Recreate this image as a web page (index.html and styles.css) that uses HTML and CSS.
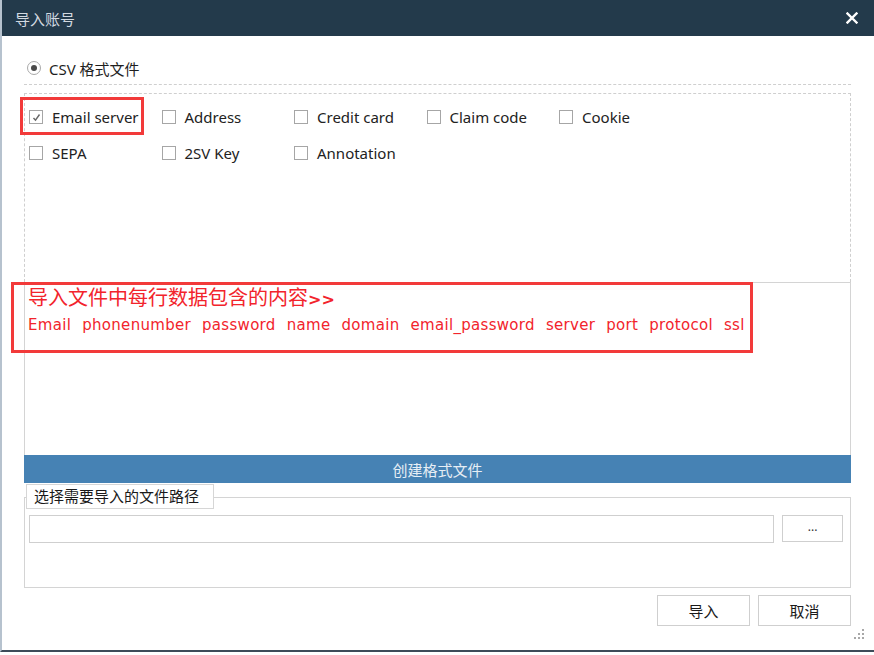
FILE: index.html
```html
<!DOCTYPE html>
<html lang="zh">
<head>
<meta charset="utf-8">
<title>导入账号</title>
<link rel="stylesheet" href="styles.css">
</head>
<body>
<div class="window">
  <div class="titlebar">
    <span class="title">导入账号</span>
    <svg class="close" width="12" height="12" viewBox="0 0 12 12"><path d="M1.5 1.5L10.5 10.5M10.5 1.5L1.5 10.5" stroke="#fff" stroke-width="2.4" stroke-linecap="square"/></svg>
  </div>
  <div class="content">
    <div class="radio-row">
      <span class="radio"><span class="dot"></span></span>
      <span class="radio-label">CSV 格式文件</span>
    </div>
    <div class="dash-line"></div>
    <div class="check-panel">
      <div class="check-grid">
        <label class="check"><span class="box checked"><svg width="11" height="11" viewBox="0 0 11 11"><path d="M2.5 6L4.5 8.2L8.5 2.5" stroke="#666" stroke-width="1.4" fill="none"/></svg></span>Email server</label>
        <label class="check"><span class="box"></span>Address</label>
        <label class="check"><span class="box"></span>Credit card</label>
        <label class="check"><span class="box"></span>Claim code</label>
        <label class="check"><span class="box"></span>Cookie</label>
        <label class="check"><span class="box"></span>SEPA</label>
        <label class="check"><span class="box"></span>2SV Key</label>
        <label class="check"><span class="box"></span>Annotation</label>
      </div>
      <div class="mark mark-email"></div>
    </div>
    <div class="info-panel">
      <div class="mark mark-info">
        <div class="info-title">导入文件中每行数据包含的内容<b>&gt;&gt;</b></div>
        <div class="info-fields">Email phonenumber password name domain email_password server port protocol ssl</div>
      </div>
    </div>
    <div class="create-bar">创建格式文件</div>
    <div class="group">
      <div class="group-label">选择需要导入的文件路径</div>
      <div class="group-row">
        <div class="path-input"></div>
        <div class="browse">...</div>
      </div>
    </div>
    <div class="footer">
      <div class="btn">导入</div>
      <div class="btn">取消</div>
    </div>
  </div>
  <svg class="grip" width="10" height="10" viewBox="0 0 10 10"><g fill="#a8a8a8"><rect x="8" y="0" width="2" height="2"/><rect x="8" y="4" width="2" height="2"/><rect x="4" y="4" width="2" height="2"/><rect x="8" y="8" width="2" height="2"/><rect x="4" y="8" width="2" height="2"/><rect x="0" y="8" width="2" height="2"/></g></svg>
</div>
</body>
</html>
```
FILE: styles.css
```css
* { box-sizing: border-box; }
html, body { margin: 0; padding: 0; background: #fff; }
body {
  width: 874px;
  height: 655px;
  font-family: "Noto Sans", "Noto Sans CJK SC", sans-serif;
  color: #1e1e1e;
  overflow: hidden;
}
.window {
  position: relative;
  width: 874px;
  height: 652px;
  border-left: 2px solid #b6c2ce;
  border-bottom: 2px solid #3d4b59;
  background: #fff;
}
.titlebar {
  height: 36px;
  background: #233a4b;
  display: flex;
  align-items: center;
  justify-content: space-between;
  padding: 0 16px 0 13px;
}
.title {
  font-family: "Noto Sans CJK SC", sans-serif;
  font-size: 15px;
  color: #d2d9e0;
}
.close { display: block; }
.content {
  padding: 22px 23px 0 22px;
}
.radio-row {
  display: flex;
  align-items: center;
  height: 20px;
  padding-left: 3px;
}
.radio {
  width: 14px;
  height: 14px;
  border: 1px solid #a9a9a9;
  border-radius: 50%;
  display: flex;
  align-items: center;
  justify-content: center;
  margin-right: 8px;
}
.dot {
  width: 6px;
  height: 6px;
  border-radius: 50%;
  background: #4a4a4a;
}
.radio-label {
  font-size: 15px;
  font-family: "Noto Sans", "Noto Sans CJK SC", sans-serif;
}
.dash-line {
  margin-top: 6px;
  border-top: 1px dashed #cfcfcf;
}
.check-panel {
  position: relative;
  margin-top: 8px;
  height: 189px;
  border: 1px dashed #cfcfcf;
  border-bottom: none;
  padding: 13px 0 0 4px;
}
.check-grid {
  display: grid;
  grid-template-columns: repeat(5, 132.5px);
  row-gap: 16px;
}
.check {
  display: flex;
  align-items: center;
  height: 20px;
  font-size: 15px;
  color: #222;
}
.box {
  width: 14px;
  height: 14px;
  border: 1px solid #a6a6a6;
  margin-right: 9px;
  display: flex;
  align-items: center;
  justify-content: center;
  flex: none;
}
.mark {
  position: absolute;
  border: 3px solid #f23a3a;
}
.mark-email {
  left: -5px;
  top: 3px;
  width: 124px;
  height: 38px;
}
.info-panel {
  position: relative;
  height: 173px;
  border: 1px solid #d4d4d4;
  border-bottom: none;
}
.mark-info {
  left: -14px;
  top: -1px;
  width: 742px;
  height: 71px;
  padding: 0 0 0 14px;
  color: #f2242c;
}
.info-title {
  font-family: "Noto Sans CJK SC", sans-serif;
  font-size: 20px;
  line-height: 24px;
}
.info-title b { font-family: "DejaVu Sans", sans-serif; font-size: 16px; }
.info-fields {
  margin-top: 3px;
  font-family: "DejaVu Sans", sans-serif;
  font-size: 15px;
  letter-spacing: 0.3px;
  word-spacing: 6px;
  line-height: 20px;
  white-space: nowrap;
}
.create-bar {
  height: 28px;
  background: #4682b4;
  color: #e6eef5;
  font-family: "Noto Sans CJK SC", sans-serif;
  font-size: 15px;
  display: flex;
  align-items: center;
  justify-content: center;
}
.group {
  position: relative;
  margin-top: 14px;
  height: 91px;
  border: 1px solid #d4d4d4;
  padding: 17px 7px 0 4px;
}
.group-label {
  position: absolute;
  left: 1px;
  top: -14px;
  height: 25px;
  padding: 0 14px 0 7px;
  border: 1px solid #d6d6d6;
  background: #fff;
  font-family: "Noto Sans CJK SC", sans-serif;
  font-size: 15px;
  line-height: 22px;
  color: #1a1a1a;
}
.group-row {
  display: flex;
  gap: 8px;
}
.path-input {
  width: 747px;
  height: 28px;
  border: 1px solid #cfcfcf;
}
.browse {
  width: 61px;
  height: 27px;
  border: 1px solid #cfcfcf;
  font-size: 12px;
  display: flex;
  align-items: center;
  justify-content: center;
  padding-bottom: 4px;
  color: #333;
}
.footer {
  display: flex;
  justify-content: flex-end;
  gap: 8px;
  margin-top: 7px;
}
.btn {
  width: 93px;
  height: 31px;
  border: 1px solid #cfcfcf;
  font-family: "Noto Sans CJK SC", sans-serif;
  font-size: 15px;
  display: flex;
  align-items: center;
  justify-content: center;
  color: #1a1a1a;
}
.grip {
  position: absolute;
  right: 10px;
  bottom: 11px;
}
```
